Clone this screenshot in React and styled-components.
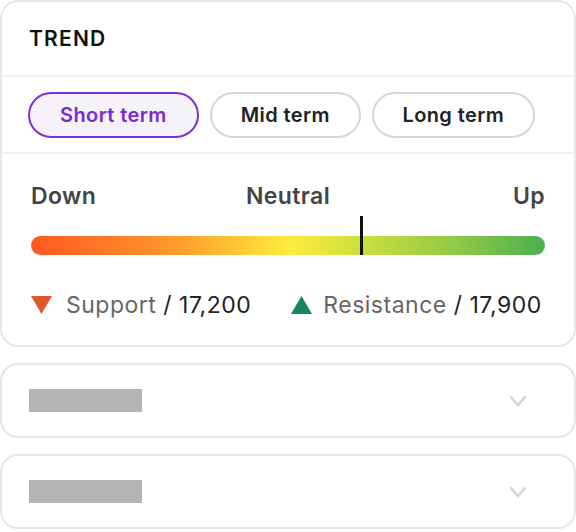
import React from "react";
import styled, { createGlobalStyle } from "styled-components";

const Global = createGlobalStyle`
  html, body { margin: 0; padding: 0; background: #fff; }
  body {
    font-family: Inter, "Noto Sans", sans-serif;
    -webkit-font-smoothing: antialiased;
  }
`;

const Stack = styled.div`
  width: 576px;
  display: flex;
  flex-direction: column;
  gap: 16px;
`;

const Card = styled.section`
  box-sizing: border-box;
  border: 2px solid #e6e6e6;
  border-radius: 18px;
  background: #fff;
  overflow: hidden;
`;

const Header = styled.header`
  height: 73px;
  display: flex;
  align-items: center;
  padding: 0 27px;
  border-bottom: 2px solid #f1f1f1;
  font-size: 21px;
  font-weight: 600;
  letter-spacing: 1.2px;
  color: #111;
`;

const Tabs = styled.div`
  display: flex;
  gap: 11px;
  padding: 15px 26px 14px;
  border-bottom: 2px solid #f1f1f1;
`;

const Pill = styled.button`
  box-sizing: border-box;
  height: 46px;
  padding: 0 ${(p) => p.$pad}px;
  border-radius: 23px;
  font-family: Inter, sans-serif;
  font-size: 20px;
  font-weight: 600;
  letter-spacing: 0.4px;
  border: 2px solid ${(p) => (p.$active ? "#7f2fd6" : "#d6d6d6")};
  background: ${(p) => (p.$active ? "#f5f2fa" : "#fff")};
  color: ${(p) => (p.$active ? "#7a2bd0" : "#222")};
  cursor: pointer;
`;

const TrendBody = styled.div`
  padding: 28px 29px 26px;
`;

const Scale = styled.div`
  display: grid;
  grid-template-columns: 1fr auto 1fr;
  font-size: 23px;
  font-weight: 600;
  letter-spacing: 0.4px;
  line-height: 28px;
  color: #444;
`;

const ScaleLabel = styled.span`
  justify-self: ${(p) => p.$align};
`;

const BarWrap = styled.div`
  position: relative;
  margin-top: 26px;
  height: 19px;
`;

const Bar = styled.div`
  height: 19px;
  border-radius: 10px;
  background: linear-gradient(
    90deg,
    #ff5722 0%,
    #ff9a2c 28%,
    #ffeb3b 50%,
    #cddf3f 64%,
    #9bcc45 80%,
    #4caf50 100%
  );
`;

const Marker = styled.div`
  position: absolute;
  top: -20px;
  bottom: 0;
  width: 3px;
  margin-left: -1.5px;
  background: #111;
`;

const Legend = styled.div`
  display: flex;
  gap: 40px;
  margin-top: 36px;
  font-size: 23px;
  letter-spacing: 0.5px;
  line-height: 28px;
`;

const LegendItem = styled.div`
  display: flex;
  align-items: center;
  gap: ${(p) => p.$gap}px;
`;

const Label = styled.span`
  color: #666;
`;

const Value = styled.span`
  color: #222;
`;

const Triangle = styled.svg`
  width: 21px;
  height: 18px;
  flex: none;
`;

const Row = styled.div`
  box-sizing: border-box;
  height: 71px;
  display: flex;
  align-items: center;
  justify-content: space-between;
  padding: 0 47px 0 27px;
`;

const Placeholder = styled.div`
  width: 113px;
  height: 23px;
  background: #b3b3b3;
`;

const Chevron = () => (
  <svg width="18" height="12" viewBox="0 0 18 12">
    <polyline points="1.5,1.5 9,10 16.5,1.5" fill="none" stroke="#d4d4d4" strokeWidth="2.6" />
  </svg>
);

const tabs = [
  { label: "Short term", pad: 30, active: true },
  { label: "Mid term", pad: 29 },
  { label: "Long term", pad: 28.5 },
];

export default function App() {
  return (
    <>
      <Global />
      <Stack>
        <Card>
          <Header>TREND</Header>
          <Tabs>
            {tabs.map((t) => (
              <Pill key={t.label} $active={t.active} $pad={t.pad}>
                {t.label}
              </Pill>
            ))}
          </Tabs>
          <TrendBody>
            <Scale>
              <ScaleLabel $align="start">Down</ScaleLabel>
              <ScaleLabel $align="center">Neutral</ScaleLabel>
              <ScaleLabel $align="end">Up</ScaleLabel>
            </Scale>
            <BarWrap>
              <Bar />
              <Marker style={{ left: "64.3%" }} />
            </BarWrap>
            <Legend>
              <LegendItem $gap={14}>
                <Triangle viewBox="0 0 21 18">
                  <polygon points="0,0 21,0 10.5,18" fill="#e0562d" />
                </Triangle>
                <span>
                  <Label>Support</Label> <Value>/ 17,200</Value>
                </span>
              </LegendItem>
              <LegendItem $gap={11}>
                <Triangle viewBox="0 0 21 18">
                  <polygon points="10.5,0 21,18 0,18" fill="#138563" />
                </Triangle>
                <span>
                  <Label>Resistance</Label> <Value>/ 17,900</Value>
                </span>
              </LegendItem>
            </Legend>
          </TrendBody>
        </Card>
        <Card>
          <Row>
            <Placeholder />
            <Chevron />
          </Row>
        </Card>
        <Card>
          <Row>
            <Placeholder />
            <Chevron />
          </Row>
        </Card>
      </Stack>
    </>
  );
}
